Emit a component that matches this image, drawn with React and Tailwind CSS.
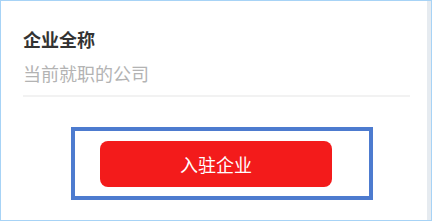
import React from 'react';

const App = () => {
  return (
    <div
      className="w-[432px] h-[221px] flex border border-[#a7d3f6] bg-white"
      style={{ fontFamily: '"Noto Sans CJK SC", "Noto Sans", sans-serif' }}
    >
      <div className="flex-1 flex flex-col">
        {/* Form field */}
        <div className="pl-[22px] pr-[17px] pt-[26px]">
          <div className="text-[18px] leading-[24px] font-bold text-[#333333]">企业全称</div>
          <div className="mt-[10px] text-[18px] leading-[24px] text-[#b3b3b3]">当前就职的公司</div>
          <div className="mt-[10px] h-[2px] bg-[#f2f2f2]" />
        </div>

        {/* Submit */}
        <div className="mt-[30px] ml-[70px] w-[302px] h-[73px] border-4 border-[#4d7bcf] pt-[10px] pl-[25px]">
          <button className="w-[232px] h-[46px] rounded-[8px] bg-[#f31b1b] text-white text-[18px] leading-[24px]">
            入驻企业
          </button>
        </div>
      </div>
      <div className="w-[4px] bg-[#e6ebf0]" />
    </div>
  );
};

export default App;
